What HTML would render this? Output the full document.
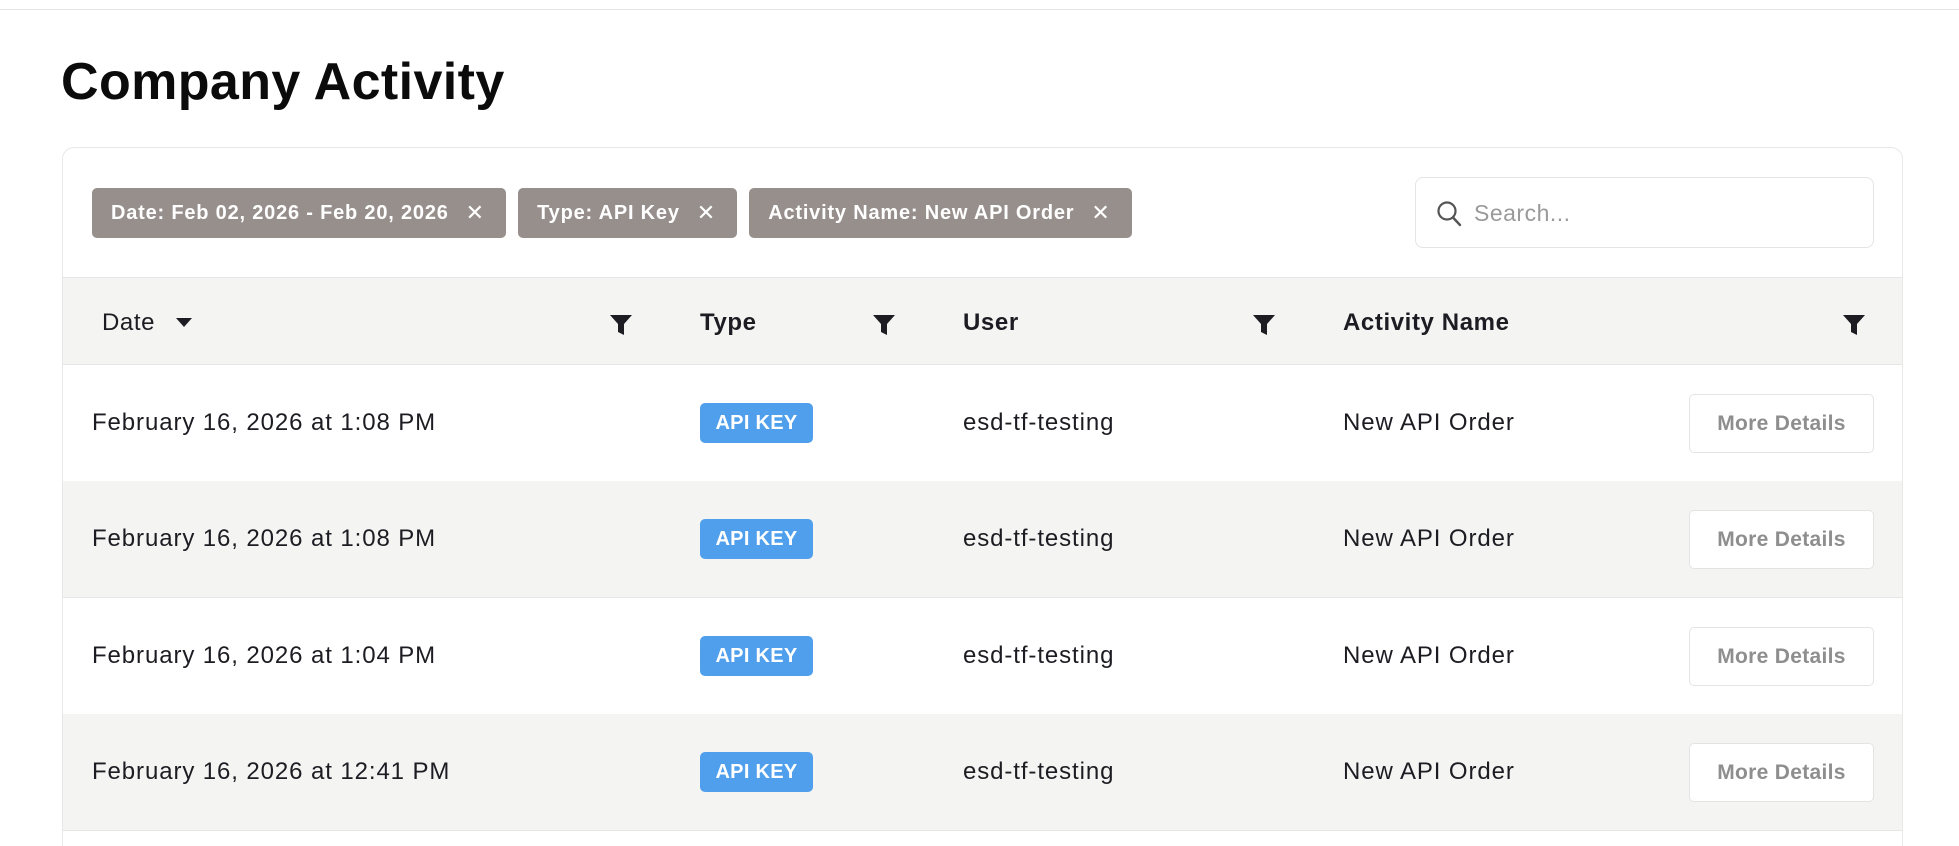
<!DOCTYPE html>
<html><head><meta charset="utf-8"><style>
*{box-sizing:border-box;margin:0;padding:0}
html,body{width:1959px;height:846px;overflow:hidden}
body{background:#fff;font-family:"Liberation Sans",sans-serif;color:#1c1c22;position:relative}
.topline{position:absolute;left:0;top:9px;width:1959px;height:1px;background:#e4e4e4}
h1{position:absolute;left:61px;top:52px;font-size:52px;font-weight:bold;letter-spacing:0.4px;color:#0b0b0b}
.card{position:absolute;left:62px;top:147px;width:1841px;height:699px;border:1px solid #e8e8e8;border-bottom:none;border-radius:12px 12px 0 0;overflow:hidden}
.chips{position:absolute;left:29px;top:40px;display:flex;gap:12px}
.chip{height:50px;background:#968f8c;border-radius:5px;color:#fff;font-size:20px;font-weight:bold;line-height:50px;padding:0 22px 0 19px;white-space:nowrap;letter-spacing:0.8px;display:flex;gap:17px}
.chip span{font-weight:normal;font-size:22px;letter-spacing:0}
.search{position:absolute;left:1352px;top:29px;width:459px;height:71px;border:1px solid #e4e4e4;border-radius:8px}
.search .ph{position:absolute;left:58px;top:22px;font-size:23px;color:#9a9a9a;letter-spacing:0.5px}
.head{position:absolute;left:0;top:129px;width:100%;height:88px;background:#f4f4f3;border-top:1px solid #e6e6e6;border-bottom:1px solid #e6e6e6}
.ht{position:absolute;top:31px;font-size:24px;font-weight:bold;color:#1c1c22;letter-spacing:0.6px}
.filt{position:absolute;top:37px}
.row{position:absolute;left:0;width:100%;height:117px;border-bottom:1px solid #e6e6e6}
.row.alt{background:#f4f4f3}
.cell{position:absolute;top:44px;font-size:24px;color:#1c1c22;letter-spacing:0.9px}
.badge{position:absolute;left:637px;top:38px;width:113px;height:40px;background:#4f9fec;border-radius:5px;color:#fff;font-size:20px;font-weight:bold;text-align:center;line-height:40px;letter-spacing:0.3px}
.btn{position:absolute;left:1626px;top:29px;width:185px;height:59px;border:1px solid #e4e4e4;border-radius:5px;background:#fff;color:#8e8e8e;font-size:21px;font-weight:bold;text-align:center;line-height:57px;letter-spacing:0.3px}
</style></head><body>
<div class="topline"></div>
<h1>Company Activity</h1>
<div class="card">
  <div class="chips">
    <div class="chip">Date: Feb 02, 2026 - Feb 20, 2026<span>✕</span></div>
    <div class="chip">Type: API Key<span>✕</span></div>
    <div class="chip">Activity Name: New API Order<span>✕</span></div>
  </div>
  <div class="search">
    <svg style="position:absolute;left:20px;top:22px" width="26" height="28" viewBox="0 0 26 28"><circle cx="11" cy="11" r="8.5" fill="none" stroke="#555" stroke-width="2.2"/><line x1="17" y1="17.5" x2="24" y2="25" stroke="#555" stroke-width="2.4" stroke-linecap="round"/></svg>
    <div class="ph">Search...</div>
  </div>
  <div class="head">
    <div class="ht" style="left:39px;font-weight:normal">Date</div>
    <svg style="position:absolute;left:113px;top:40px" width="16" height="10"><path d="M0 0h16l-8 9z" fill="#1c1c22"/></svg>
    <div class="ht" style="left:637px">Type</div>
    <div class="ht" style="left:900px">User</div>
    <div class="ht" style="left:1280px">Activity Name</div>
    <svg class="filt" style="left:547px" width="22" height="20" viewBox="0 0 22 20"><path d="M0 0h22l-8 9v11l-6-3v-8z" fill="#1c1c22"/></svg>
    <svg class="filt" style="left:810px" width="22" height="20" viewBox="0 0 22 20"><path d="M0 0h22l-8 9v11l-6-3v-8z" fill="#1c1c22"/></svg>
    <svg class="filt" style="left:1190px" width="22" height="20" viewBox="0 0 22 20"><path d="M0 0h22l-8 9v11l-6-3v-8z" fill="#1c1c22"/></svg>
    <svg class="filt" style="left:1780px" width="22" height="20" viewBox="0 0 22 20"><path d="M0 0h22l-8 9v11l-6-3v-8z" fill="#1c1c22"/></svg>
  </div>
  <div class="row" style="top:217px"><div class="cell" style="left:29px">February 16, 2026 at 1:08 PM</div><div class="badge">API KEY</div><div class="cell" style="left:900px">esd-tf-testing</div><div class="cell" style="left:1280px">New API Order</div><div class="btn">More Details</div></div>
  <div class="row alt" style="top:333px"><div class="cell" style="left:29px">February 16, 2026 at 1:08 PM</div><div class="badge">API KEY</div><div class="cell" style="left:900px">esd-tf-testing</div><div class="cell" style="left:1280px">New API Order</div><div class="btn">More Details</div></div>
  <div class="row" style="top:450px"><div class="cell" style="left:29px">February 16, 2026 at 1:04 PM</div><div class="badge">API KEY</div><div class="cell" style="left:900px">esd-tf-testing</div><div class="cell" style="left:1280px">New API Order</div><div class="btn">More Details</div></div>
  <div class="row alt" style="top:566px"><div class="cell" style="left:29px">February 16, 2026 at 12:41 PM</div><div class="badge">API KEY</div><div class="cell" style="left:900px">esd-tf-testing</div><div class="cell" style="left:1280px">New API Order</div><div class="btn">More Details</div></div>
</div>
</body></html>
